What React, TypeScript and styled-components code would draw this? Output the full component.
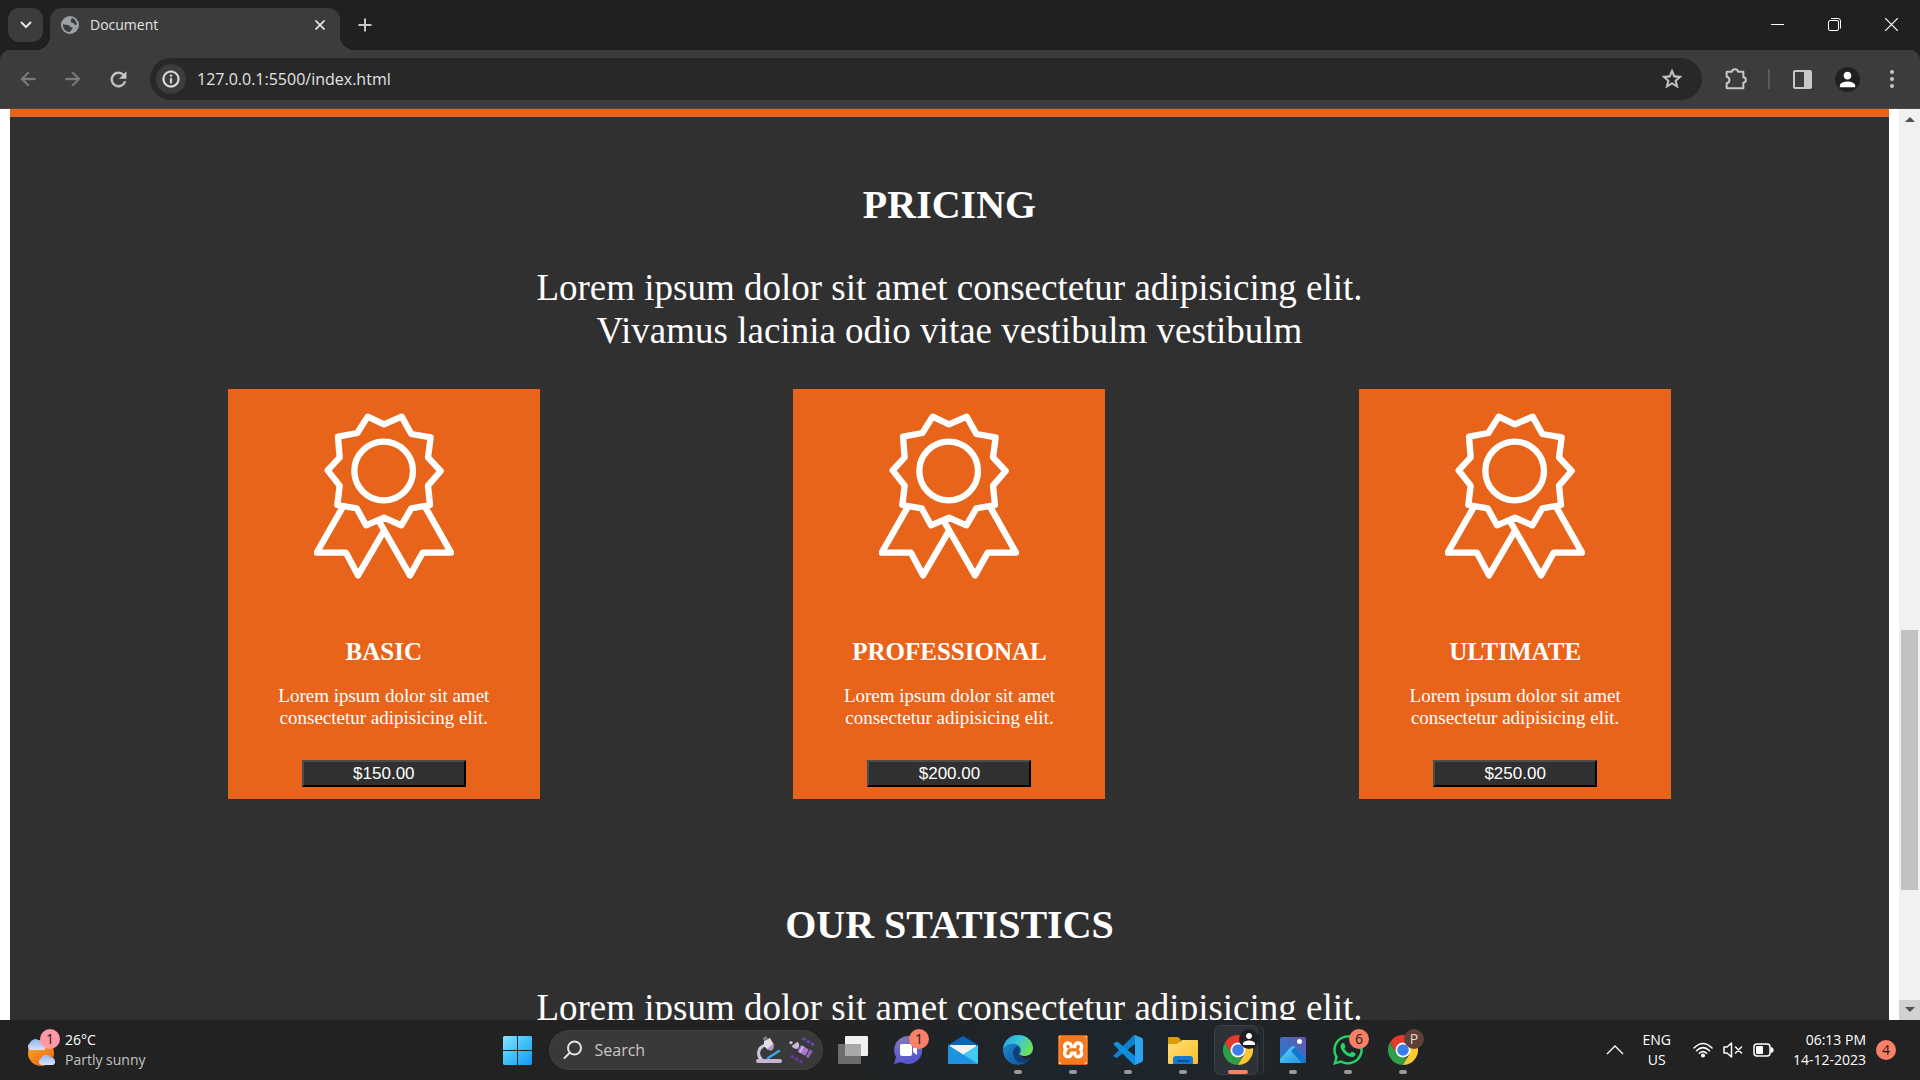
import React, { ReactNode } from "react";
import styled, { createGlobalStyle, css } from "styled-components";
import { MdArrowBack, MdArrowForward, MdRefresh, MdStarBorder, MdInfoOutline, MdPerson } from "react-icons/md";
import { FaWhatsapp } from "react-icons/fa";
import { SiXampp } from "react-icons/si";

const GlobalStyle = createGlobalStyle`
  *, *::before, *::after { box-sizing: border-box; }
  body { margin: 0; background: #222; }
  h2, h3, p { margin: 0; }
  button { font: inherit; color: inherit; }
`;

const UI_FONT = `"Open Sans", "Noto Sans", sans-serif`;
const ORANGE = "#e8641b";
const CHARCOAL = "#303030";

const Desktop = styled.div`
  display: flex;
  flex-direction: column;
  height: 100vh;
  overflow: hidden;
  font-family: ${UI_FONT};
  color: #e3e3e3;
`;

/* ---------- browser frame ---------- */

const TabStrip = styled.header`
  display: flex;
  align-items: flex-start;
  flex: none;
  height: 50px;
  padding: 8px 0 0 8px;
  background: #1f2120;
`;

const PlainButton = styled.button`
  display: flex;
  align-items: center;
  justify-content: center;
  flex: none;
  padding: 0;
  border: 0;
  background: none;
`;

const TabSearch = styled(PlainButton)`
  width: 35px;
  height: 34px;
  border-radius: 11px;
  background: #3c3c3c;
`;

const Tab = styled.div`
  position: relative;
  display: flex;
  align-items: center;
  width: 290px;
  height: 42px;
  margin-left: 7px;
  padding: 0 10px 8px 11px;
  border-radius: 12px 12px 0 0;
  background: #3c3c3c;

  &::before,
  &::after {
    content: "";
    position: absolute;
    bottom: 0;
    width: 14px;
    height: 14px;
  }
  &::before {
    right: 100%;
    background: radial-gradient(circle at 0 0, transparent 14px, #3c3c3c 14px);
  }
  &::after {
    left: 100%;
    background: radial-gradient(circle at 100% 0, transparent 14px, #3c3c3c 14px);
  }
`;

const TabTitle = styled.span`
  flex: 1;
  margin-left: 11px;
  font-size: 14px;
  line-height: 20px;
`;

const TabClose = styled(PlainButton)`
  width: 20px;
  height: 20px;
`;

const NewTab = styled(PlainButton)`
  width: 32px;
  height: 34px;
  margin-left: 9px;
`;

const WindowControls = styled.div`
  display: flex;
  margin-left: auto;
`;

const WindowButton = styled(PlainButton)`
  width: 57px;
  height: 33px;
`;

const Toolbar = styled.div`
  display: flex;
  align-items: center;
  flex: none;
  height: 59px;
  padding: 0 8px;
  border-bottom: 1px solid #4a4a4a;
  background: #3c3c3c;
  border-radius: 10px 10px 0 0;
`;

const ToolbarWrap = styled.div`
  flex: none;
  background: #1f2120;
`;

const boldGlyph = css`
  path:not([fill="none"]) {
    stroke: currentColor;
    stroke-width: 0.5px;
  }
`;

const NavGroup = styled.nav`
  display: flex;
  gap: 5px;
  ${boldGlyph}
`;

const ToolButton = styled(PlainButton)<{ $dim?: boolean; $wide?: boolean }>`
  width: ${(p) => (p.$wide ? 50 : 40)}px;
  height: 40px;
  color: ${(p) => (p.$dim ? "#7b7b7b" : "#c7c7c7")};
`;

const Omnibox = styled.form`
  display: flex;
  align-items: center;
  flex: 1;
  height: 42px;
  margin: 0 14px 0 12px;
  padding: 0 10px 0 6px;
  border-radius: 21px;
  background: #282828;
  ${boldGlyph}
`;

const SiteInfo = styled(PlainButton)`
  width: 30px;
  height: 30px;
  border-radius: 50%;
  background: #3c3c3c;
`;

const AddressInput = styled.input`
  flex: 1;
  min-width: 0;
  padding: 0;
  margin-left: 11px;
  border: 0;
  outline: 0;
  background: none;
  color: #e3e3e3;
  font: 16px/24px ${UI_FONT};
`;

const ToolDivider = styled.span`
  width: 2px;
  height: 20px;
  margin: 0 12px;
  background: #5c5c5c;
`;

const Avatar = styled.span`
  display: flex;
  align-items: center;
  justify-content: center;
  width: 25px;
  height: 25px;
  border-radius: 50%;
  background: #1f2120;
  color: #fff;
`;

/* ---------- web page ---------- */

const Viewport = styled.div`
  display: flex;
  flex: 1;
  min-height: 0;
  background: #fff;
`;

const Page = styled.main`
  flex: 1;
  min-width: 0;
  overflow: hidden;
  padding: 0 10px;
  font-family: "Liberation Serif", serif;
  color: #fff;
`;

const Section = styled.section<{ $ruled?: boolean }>`
  display: flow-root;
  background: ${CHARCOAL};
  ${(p) => p.$ruled && css`border-top: 8px solid ${ORANGE};`}
`;

const SectionTitle = styled.h2`
  margin-top: 65px;
  font-size: 40px;
  line-height: 46px;
  text-align: center;
`;

const Lead = styled.p`
  margin-top: 38px;
  font-size: 37px;
  line-height: 43px;
  text-align: center;
`;

const Plans = styled.div`
  display: flex;
  justify-content: space-around;
  margin-top: 37px;
  padding: 0 91px 38px;
`;

const PlanCard = styled.article`
  display: flex;
  flex-direction: column;
  align-items: center;
  width: 312px;
  padding: 24px 12px 12px;
  background: ${ORANGE};
  text-align: center;
`;

const PlanName = styled.h3`
  margin-top: 58px;
  font-size: 25px;
  line-height: 29px;
`;

const PlanText = styled.p`
  margin-top: 19px;
  font-size: 19px;
  line-height: 22px;
`;

const PriceButton = styled.button`
  width: 164px;
  height: 27px;
  margin-top: 31px;
  padding: 0;
  border: 2px solid;
  border-color: #4c4c4c #000 #000 #4c4c4c;
  background: ${CHARCOAL};
  color: #fff;
  font: 17px/22px "Liberation Sans", sans-serif;
`;

const ScrollBar = styled.div`
  display: flex;
  flex-direction: column;
  width: 21px;
  background: #f1f1f1;
`;

const ScrollArrow = styled(PlainButton)<{ $active?: boolean }>`
  height: 20px;
  background: ${(p) => (p.$active ? "#d2d2d2" : "#f1f1f1")};
`;

const ScrollTrack = styled.div`
  display: grid;
  flex: 1;
  grid-template-rows: 500fr 260fr 110fr;
  padding: 0 2px;
`;

const ScrollThumb = styled.div`
  grid-row: 2;
  background: #c1c1c1;
`;

/* ---------- taskbar ---------- */

const Taskbar = styled.footer`
  display: grid;
  grid-template-columns: 1fr auto 1fr;
  align-items: center;
  flex: none;
  height: 60px;
  background: radial-gradient(ellipse 320px 120px at 58% 60%, #1d262d, #222);
  font-size: 15px;
  line-height: 20px;
`;

const Weather = styled(PlainButton)`
  position: relative;
  justify-self: start;
  gap: 9px;
  padding-left: 26px;
  text-align: left;
`;

const Lines = styled.span<{ $align?: string }>`
  display: flex;
  flex-direction: column;
  color: #fff;
  font-size: 14px;
  text-align: ${(p) => p.$align ?? "left"};
`;

const Muted = styled.span`
  color: #c4c4c4;
`;

const Badge = styled.span<{ $color: string; $light?: boolean; $x: number; $y: number }>`
  position: absolute;
  left: ${(p) => p.$x}px;
  top: ${(p) => p.$y}px;
  display: flex;
  align-items: center;
  justify-content: center;
  width: 20px;
  height: 20px;
  border-radius: 50%;
  background: ${(p) => p.$color};
  color: ${(p) => (p.$light ? "#e6d8d4" : "#1c1c1c")};
  font-size: 14px;
  line-height: 20px;
`;

const Dock = styled.div`
  display: flex;
  align-items: center;
`;

const DockItem = styled(PlainButton)`
  position: relative;
  width: 55px;
  height: 50px;
`;

const ActiveTile = styled.span`
  position: absolute;
  inset: 0 8px 0 3px;
  border: 1px solid #3a4045;
  border-radius: 6px;
  background: #2c3237;
  box-shadow: 5px 0 0 #22282c, 6px 0 0 #33393d;
`;

const DockIcon = styled.span`
  position: relative;
  display: flex;
`;

const Running = styled.span<{ $active?: boolean }>`
  position: absolute;
  bottom: 1px;
  left: 50%;
  width: ${(p) => (p.$active ? 20 : 8)}px;
  height: 4px;
  border-radius: 2px;
  background: ${(p) => (p.$active ? "#f98066" : "#9a9a9a")};
  transform: translateX(-50%);
`;

const SearchBox = styled.label`
  display: flex;
  align-items: center;
  gap: 6px;
  width: 274px;
  height: 40px;
  margin: 0 3px 0 4px;
  padding: 0 8px 0 13px;
  border: 1px solid #414141;
  border-radius: 20px;
  background: #393939;
`;

const SearchInput = styled.input`
  flex: 1;
  min-width: 0;
  padding: 0;
  margin-left: 6px;
  border: 0;
  outline: 0;
  background: none;
  font: 16px/24px ${UI_FONT};
  &::placeholder { color: #c8c8c8; opacity: 1; }
`;

const Tray = styled.div`
  display: flex;
  align-items: center;
  justify-self: end;
  padding-right: 24px;
`;

const TrayButton = styled(PlainButton)<{ $gap?: number }>`
  margin-left: ${(p) => p.$gap ?? 0}px;
`;

const Count = styled.span`
  width: 20px;
  height: 20px;
  border-radius: 50%;
  background: #f98066;
  color: #1c1c1c;
  font-size: 14px;
  text-align: center;
`;

/* ---------- drawings ---------- */

const Globe = () => (
  <svg width="18" height="18" viewBox="0 0 54 54">
    <circle cx="27" cy="27" r="27" fill="#9aa0a6" />
    <path d="M33 6C40 8 47 16 48 25C44 29 39 26 38 21C32 22 27 18 30 13C31 10 31 8 33 6Z" fill="#3c3c3c" />
    <path d="M6 24C10 27 17 26 21 27C28 28 25 34 31 34C36 34 36 38 32 41C28 44 29 47 24 48C13 46 5 38 6 24Z" fill="#3c3c3c" />
  </svg>
);

const Puzzle = () => (
  <svg width="22" height="22" viewBox="676 202 66 66" fill="none" stroke="#c7c7c7" strokeWidth="6" strokeLinejoin="round">
    <path d="M681 213H697C698 203 714 203 715 213H731V230C741 231 741 245 731 246V263H681V248C692 246 692 230 681 228Z" />
  </svg>
);

const Award = () => (
  <svg width="140" height="166" viewBox="282 100 420 498" fill="none" stroke="#fff" strokeWidth="19" strokeLinejoin="round" strokeLinecap="round">
    <path d="M443 111L492 134L545 111L574 163L632 173L624 233L662 274L624 318L630 376L574 386L544 437L492 414L438 437L410 386L352 376L359 318L323 272L359 233L354 171L412 160Z" />
    <circle cx="491" cy="274" r="88" />
    <path d="M366 386L290 519H378L414 587L491 455" />
    <path d="M618 386L693 519H608L570 587L480 430" />
  </svg>
);

const Arrow = ({ down }: { down?: boolean }) => (
  <svg width="10" height="6" viewBox="0 0 10 6">
    <path d={down ? "M0 0H10L5 5Z" : "M0 6H10L5 1Z"} fill="#505050" />
  </svg>
);

const Sun = () => (
  <svg width="30" height="36" viewBox="0 0 30 36">
    <defs>
      <linearGradient id="sun" x1="0" y1="0" x2=".6" y2="1">
        <stop offset="0" stopColor="#fbb42c" />
        <stop offset="1" stopColor="#ee6b12" />
      </linearGradient>
      <linearGradient id="cloud" x1="0" y1="0" x2="0" y2="1">
        <stop offset="0" stopColor="#93b4ee" />
        <stop offset="1" stopColor="#d5e3fb" />
      </linearGradient>
    </defs>
    <circle cx="15" cy="21" r="13" fill="url(#sun)" />
    <path d="M4 18a4 4 0 0 1 0-7a6 6 0 0 1 10-2a5 5 0 0 1 5 4v5Z" fill="url(#cloud)" />
    <path d="M15 33a3.500 3.500 0 0 1 0-6.500a5.500 5.500 0 0 1 10-1a4 4 0 0 1 2 7.500Z" fill="url(#cloud)" />
  </svg>
);

const Start = () => (
  <svg width="29" height="29" viewBox="0 0 29 29">
    <defs>
      <linearGradient id="win" x1="0" y1="0" x2="1" y2="1">
        <stop offset="0" stopColor="#8be3ff" />
        <stop offset=".5" stopColor="#3fc1fb" />
        <stop offset="1" stopColor="#1496f4" />
      </linearGradient>
    </defs>
    <path d="M1 0H14V14H0V1ZM15 0H28L29 1V14H15ZM0 15H14V29H1L0 28ZM15 15H29V28L28 29H15Z" fill="url(#win)" />
  </svg>
);

const Loupe = () => (
  <svg width="20" height="20" viewBox="0 0 20 20" fill="none" stroke="#e4e4e4" strokeWidth="2" strokeLinecap="round">
    <circle cx="11.500" cy="8" r="6.500" />
    <path d="M6.500 13L1.500 18" />
  </svg>
);

const Microscope = () => (
  <svg width="28" height="28" viewBox="0 0 28 28">
    <path d="M11 9C2 11 2 20 7 24" fill="none" stroke="#cfc6da" strokeWidth="3" />
    <path d="M13 22L24 15" stroke="#38a8e8" strokeWidth="2.500" strokeLinecap="round" />
    <path d="M9 5L15 2L19 9L13 14L9 10Z" fill="#e3dbe6" />
    <path d="M8 2L11 0L13 3L9 5Z" fill="#817987" />
    <path d="M12 13L18 8L19 12L16 15Z" fill="#b496c9" />
    <rect x="1" y="23" width="26" height="4" rx="2" fill="#c7b4d3" />
  </svg>
);

const Satellite = () => (
  <svg width="25" height="27" viewBox="0 0 75 81">
    <g transform="rotate(30 38 40)" fill="#6d45b0">
      <rect x="22" y="3" width="10" height="9" />
      <rect x="37" y="3" width="10" height="9" />
      <rect x="52" y="3" width="10" height="9" />
    </g>
    <g transform="rotate(30 38 40)" fill="#6139a0">
      <rect x="18" y="65" width="10" height="10" />
      <rect x="33" y="65" width="10" height="10" />
      <rect x="48" y="65" width="10" height="10" />
    </g>
    <g transform="rotate(30 42 40)">
      <rect x="29" y="29" width="27" height="22" rx="3" fill="#a678cf" />
      <rect x="34" y="29" width="6" height="22" fill="#cdaee8" />
      <rect x="59" y="27" width="9" height="25" rx="3" fill="#9066bd" />
    </g>
    <path d="M26 14Q36 25 25 36Q14 38 8 27Z" fill="#cdb9dc" />
    <circle cx="6" cy="17" r="5" fill="#cbb2e0" />
  </svg>
);

const TaskView = () => (
  <svg width="30" height="28" viewBox="0 0 30 28">
    <rect x="7" y="0" width="23" height="20" rx="1" fill="#f0f0f0" />
    <rect x="0" y="8" width="23" height="20" rx="1" fill="#6d6d6d" />
    <rect x="7" y="8" width="16" height="12" fill="#a8a8a8" />
  </svg>
);

const Chat = () => (
  <svg width="30" height="30" viewBox="0 0 30 30">
    <defs>
      <linearGradient id="chat" x1="0" y1="0" x2=".3" y2="1">
        <stop offset="0" stopColor="#8d78b8" />
        <stop offset="1" stopColor="#5257cf" />
      </linearGradient>
    </defs>
    <path d="M15 1a14 14 0 1 1-7 26L1 29L3 22A14 14 0 0 1 15 1Z" fill="url(#chat)" />
    <rect x="7" y="9" width="12" height="12" rx="2" fill="#fff" />
    <path d="M20 13L24 10V20L20 17Z" fill="#fff" />
  </svg>
);

const Mail = () => (
  <svg width="30" height="28" viewBox="0 0 30 28">
    <path d="M0 9L15 0L30 9V14H0Z" fill="#0a64b4" />
    <path d="M2 9H28V20H2Z" fill="#f1f1f1" />
    <path d="M0 9L15 19L0 28Z" fill="#2ba4e8" />
    <path d="M30 9L0 28H30Z" fill="#41c8f5" />
    <path d="M0 9L30 28H0Z" fill="#1f93e0" />
  </svg>
);

const Edge = () => (
  <svg width="30" height="30" viewBox="0 0 30 30">
    <defs>
      <linearGradient id="edgeTop" x1="0" y1="0" x2="1" y2=".5">
        <stop offset="0" stopColor="#1f9fe0" />
        <stop offset=".5" stopColor="#38c6d8" />
        <stop offset="1" stopColor="#6fe05c" />
      </linearGradient>
      <linearGradient id="edgeLow" x1="0" y1="0" x2="1" y2="1">
        <stop offset="0" stopColor="#1b8fdd" />
        <stop offset="1" stopColor="#114a8b" />
      </linearGradient>
    </defs>
    <circle cx="15" cy="15" r="15" fill="url(#edgeLow)" />
    <path d="M0 14C1 5 8 0 15 0C24 0 30 6 30 13C30 18 26 21 22 21C18 21 16 20 17 18C19 16 18 11 13 9C8 8 3 9 0 14Z" fill="url(#edgeTop)" />
    <path d="M13 12C9 14 9 22 14 26C18 29 24 28 28 23C24 25 18 24 16 20C15 17 17 16 17 14C16 12 15 11 13 12Z" fill="#0f3e78" />
    <path d="M17 18C16 20 18 21 22 21C25 21 29 19 30 16V22L28 23C22 26 16 22 17 18Z" fill="#20282e" />
  </svg>
);

const Code = () => (
  <svg width="30" height="30" viewBox="0 0 30 30">
    <path d="M22 0L29 3Q30 4 30 5V25Q30 26 29 27L22 30L20 29Q22 29 22 27V3Q22 1 20 1Z" fill="#2aa5f0" />
    <path d="M1 20L20 1Q22 0 22 3V9L4 23Q3 23 2 22L1 22Q0 21 1 20Z" fill="#0f7fcb" />
    <path d="M1 10Q0 9 1 8L3 7Q4 7 5 7L22 21V27Q22 30 20 29Z" fill="#0e8fdc" />
  </svg>
);

const Folder = () => (
  <svg width="30" height="28" viewBox="0 0 30 28">
    <defs>
      <linearGradient id="folder" x1="0" y1="0" x2="1" y2="1">
        <stop offset="0" stopColor="#ffe07a" />
        <stop offset="1" stopColor="#fbbd24" />
      </linearGradient>
    </defs>
    <path d="M0 2Q0 1 1 1H10L13 4L10 9H0Z" fill="#dd9b0a" />
    <path d="M0 8H9L14 4H29Q30 4 30 5V27Q30 28 29 28H1Q0 28 0 27Z" fill="url(#folder)" />
    <path d="M5 28V23Q5 20 8 20H22Q25 20 25 23V28Z" fill="#1679cf" />
    <rect x="9" y="24" width="12" height="2" rx="1" fill="#0b4f94" />
  </svg>
);

const Chrome = () => (
  <svg width="30" height="30" viewBox="0 0 30 30">
    <path d="M2 7.500A15 15 0 0 1 28 7.500H15L8.500 18.700Z" fill="#e33b2e" />
    <path d="M2 7.500L8.500 18.700L15 22.500H19.300L15 30A15 15 0 0 1 2 7.500Z" fill="#2c9f47" />
    <path d="M28 7.500A15 15 0 0 1 15 30L21.500 18.700V7.500Z" fill="#fdc82f" />
    <circle cx="15" cy="15" r="7.500" fill="#fff" />
    <circle cx="15" cy="15" r="5.800" fill="#3b7ded" />
  </svg>
);

const Photos = () => (
  <svg width="26" height="26" viewBox="0 0 26 26">
    <defs>
      <linearGradient id="sky" x1="0" y1="1" x2="1" y2="0">
        <stop offset="0" stopColor="#1682d8" />
        <stop offset="1" stopColor="#6a57ad" />
      </linearGradient>
      <linearGradient id="hill" x1="0" y1="0" x2="1" y2="1">
        <stop offset="0" stopColor="#5fd8fa" />
        <stop offset="1" stopColor="#1b90e0" />
      </linearGradient>
    </defs>
    <rect width="26" height="26" rx="2" fill="url(#sky)" />
    <path d="M2 26H0V22L11 10Q13 8 15 10L26 22V24Q26 26 24 26Z" fill="url(#hill)" />
    <path d="M15 10L26 22V24Q26 26 24 26H22L11 14Z" fill="#1476cc" />
    <circle cx="19.500" cy="4.500" r="2.500" fill="#fff" />
  </svg>
);

const XamppTile = styled.span`
  display: flex;
  border: 1px solid #d35f10;
  border-radius: 2px;
  background: #fff;
  color: #f47a20;
`;

const Wifi = () => (
  <svg width="20" height="16" viewBox="0 0 20 16" fill="none" stroke="#fff" strokeWidth="1.500" strokeLinecap="round">
    <path d="M1 6Q10-3 19 6M3.500 8.700Q10 2.500 16.500 8.700M6.300 11.300Q10 8 13.700 11.300" />
    <circle cx="10" cy="13.500" r="1.300" fill="#fff" />
  </svg>
);

const Muffled = () => (
  <svg width="20" height="16" viewBox="0 0 20 16" fill="none" stroke="#fff" strokeWidth="1.500" strokeLinejoin="round" strokeLinecap="round">
    <path d="M1 5H4L8.500 1V15L4 11H1ZM12.500 5L18.500 11M18.500 5L12.500 11" />
  </svg>
);

const Battery = () => (
  <svg width="21" height="14" viewBox="0 0 21 14">
    <rect x="1" y="1" width="16" height="12" rx="3" fill="none" stroke="#fff" strokeWidth="1.500" />
    <rect x="3" y="3" width="7" height="8" rx="1" fill="#fff" />
    <path d="M18 4.500L20 5.500V8.500L18 9.500Z" fill="#fff" stroke="#fff" />
  </svg>
);

/* ---------- content ---------- */

const plans = [
  { name: "BASIC", price: "$150.00" },
  { name: "PROFESSIONAL", price: "$200.00" },
  { name: "ULTIMATE", price: "$250.00" },
];

interface DockApp {
  label: string;
  icon: ReactNode;
  running?: boolean;
  active?: boolean;
}

const apps: DockApp[] = [
  { label: "Task view", icon: <TaskView /> },
  { label: "Chat", icon: <><Chat /><Badge $color="#f98066" $x={16} $y={-6}>1</Badge></> },
  { label: "Mail", icon: <Mail /> },
  { label: "Microsoft Edge", icon: <Edge />, running: true },
  { label: "XAMPP", icon: <XamppTile><SiXampp size={28} /></XamppTile>, running: true },
  { label: "Visual Studio Code", icon: <Code />, running: true },
  { label: "File Explorer", icon: <Folder />, running: true },
  {
    label: "Google Chrome",
    icon: <><Chrome /><Badge $color="#202020" $light $x={16} $y={-6}><MdPerson size={18} color="#fff" /></Badge></>,
    running: true,
    active: true,
  },
  { label: "Photos", icon: <Photos />, running: true },
  { label: "WhatsApp", icon: <><FaWhatsapp size={34} color="#25d366" /><Badge $color="#f98066" $x={18} $y={-4}>6</Badge></>, running: true },
  { label: "Google Chrome, profile P", icon: <><Chrome /><Badge $color="#5d4037" $light $x={16} $y={-6}>P</Badge></>, running: true },
];

const LoremLead = () => (
  <Lead>
    Lorem ipsum dolor sit amet consectetur adipisicing elit.
    <br />
    Vivamus lacinia odio vitae vestibulm vestibulm
  </Lead>
);

export default function App() {
  return (
    <Desktop>
      <GlobalStyle />
      <TabStrip>
        <TabSearch aria-label="Search tabs">
          <svg width="12" height="8" viewBox="0 0 12 8" fill="none" stroke="#e3e3e3" strokeWidth="2"><path d="M1 1L6 6L11 1" /></svg>
        </TabSearch>
        <Tab>
          <Globe />
          <TabTitle>Document</TabTitle>
          <TabClose aria-label="Close tab">
            <svg width="10" height="10" viewBox="0 0 10 10" stroke="#e3e3e3" strokeWidth="1.800"><path d="M.5.5L9.500 9.500M9.500.5L.5 9.500" /></svg>
          </TabClose>
        </Tab>
        <NewTab aria-label="New tab">
          <svg width="14" height="14" viewBox="0 0 14 14" stroke="#c7c7c7" strokeWidth="2"><path d="M7 .5V13.500M.5 7H13.500" /></svg>
        </NewTab>
        <WindowControls>
          <WindowButton aria-label="Minimize">
            <svg width="13" height="13" viewBox="0 0 13 13" stroke="#fff"><path d="M0 6.500H13" /></svg>
          </WindowButton>
          <WindowButton aria-label="Restore">
            <svg width="13" height="13" viewBox="0 0 13 13" fill="none" stroke="#fff">
              <rect x=".5" y="2.500" width="10" height="10" rx="1.500" />
              <path d="M3 .5H10Q12.500.5 12.500 3V10.500" />
            </svg>
          </WindowButton>
          <WindowButton aria-label="Close">
            <svg width="13" height="13" viewBox="0 0 13 13" stroke="#fff" strokeWidth="1.200"><path d="M0 0L13 13M13 0L0 13" /></svg>
          </WindowButton>
        </WindowControls>
      </TabStrip>
      <ToolbarWrap>
        <Toolbar>
          <NavGroup>
            <ToolButton $dim aria-label="Back"><MdArrowBack size={22} /></ToolButton>
            <ToolButton $dim aria-label="Forward"><MdArrowForward size={22} /></ToolButton>
            <ToolButton aria-label="Reload"><MdRefresh size={23} /></ToolButton>
          </NavGroup>
          <Omnibox>
            <SiteInfo type="button" aria-label="Site information"><MdInfoOutline size={20} /></SiteInfo>
            <AddressInput aria-label="Address" defaultValue="127.0.0.1:5500/index.html" />
            <ToolButton type="button" aria-label="Bookmark this page"><MdStarBorder size={24} /></ToolButton>
          </Omnibox>
          <ToolButton aria-label="Extensions"><Puzzle /></ToolButton>
          <ToolDivider />
          <ToolButton aria-label="Side panel">
            <svg width="19" height="19" viewBox="0 0 19 19">
              <rect x="1" y="1" width="17" height="17" rx="1" fill="none" stroke="#c7c7c7" strokeWidth="2" />
              <rect x="11" y="1" width="7" height="17" fill="#c7c7c7" />
            </svg>
          </ToolButton>
          <ToolButton $wide aria-label="Profile"><Avatar><MdPerson size={23} /></Avatar></ToolButton>
          <ToolButton aria-label="Menu">
            <svg width="4" height="18" viewBox="0 0 4 18" fill="#c7c7c7">
              <circle cx="2" cy="2" r="2" /><circle cx="2" cy="9" r="2" /><circle cx="2" cy="16" r="2" />
            </svg>
          </ToolButton>
        </Toolbar>
      </ToolbarWrap>

      <Viewport>
        <Page>
          <Section $ruled>
            <SectionTitle>PRICING</SectionTitle>
            <LoremLead />
            <Plans>
              {plans.map((plan) => (
                <PlanCard key={plan.name}>
                  <Award />
                  <PlanName>{plan.name}</PlanName>
                  <PlanText>Lorem ipsum dolor sit amet<br />consectetur adipisicing elit.</PlanText>
                  <PriceButton>{plan.price}</PriceButton>
                </PlanCard>
              ))}
            </Plans>
          </Section>
          <Section>
            <SectionTitle>OUR STATISTICS</SectionTitle>
            <LoremLead />
          </Section>
        </Page>
        <ScrollBar>
          <ScrollArrow aria-label="Scroll up"><Arrow /></ScrollArrow>
          <ScrollTrack><ScrollThumb /></ScrollTrack>
          <ScrollArrow $active aria-label="Scroll down"><Arrow down /></ScrollArrow>
        </ScrollBar>
      </Viewport>

      <Taskbar>
        <Weather>
          <Sun />
          <Lines><span>26°C</span><Muted>Partly sunny</Muted></Lines>
          <Badge $color="#ff99a4" $x={40} $y={-1}>1</Badge>
        </Weather>
        <Dock>
          <DockItem aria-label="Start"><Start /></DockItem>
          <SearchBox>
            <Loupe />
            <SearchInput aria-label="Search" placeholder="Search" />
            <Microscope />
            <Satellite />
          </SearchBox>
          {apps.map((app) => (
            <DockItem key={app.label} aria-label={app.label}>
              {app.active && <ActiveTile />}
              <DockIcon>{app.icon}</DockIcon>
              {app.running && <Running $active={app.active} />}
            </DockItem>
          ))}
        </Dock>
        <Tray>
          <TrayButton aria-label="Show hidden icons">
            <svg width="18" height="10" viewBox="0 0 18 10" fill="none" stroke="#fff" strokeWidth="1.300"><path d="M1 9L9 1L17 9" /></svg>
          </TrayButton>
          <TrayButton $gap={18}><Lines $align="center"><span>ENG</span><span>US</span></Lines></TrayButton>
          <TrayButton $gap={22} aria-label="Network"><Wifi /></TrayButton>
          <TrayButton $gap={10} aria-label="Volume"><Muffled /></TrayButton>
          <TrayButton $gap={10} aria-label="Battery"><Battery /></TrayButton>
          <TrayButton $gap={19}><Lines $align="right"><span>06:13 PM</span><span>14-12-2023</span></Lines></TrayButton>
          <TrayButton $gap={10} aria-label="Notifications"><Count>4</Count></TrayButton>
        </Tray>
      </Taskbar>
    </Desktop>
  );
}
